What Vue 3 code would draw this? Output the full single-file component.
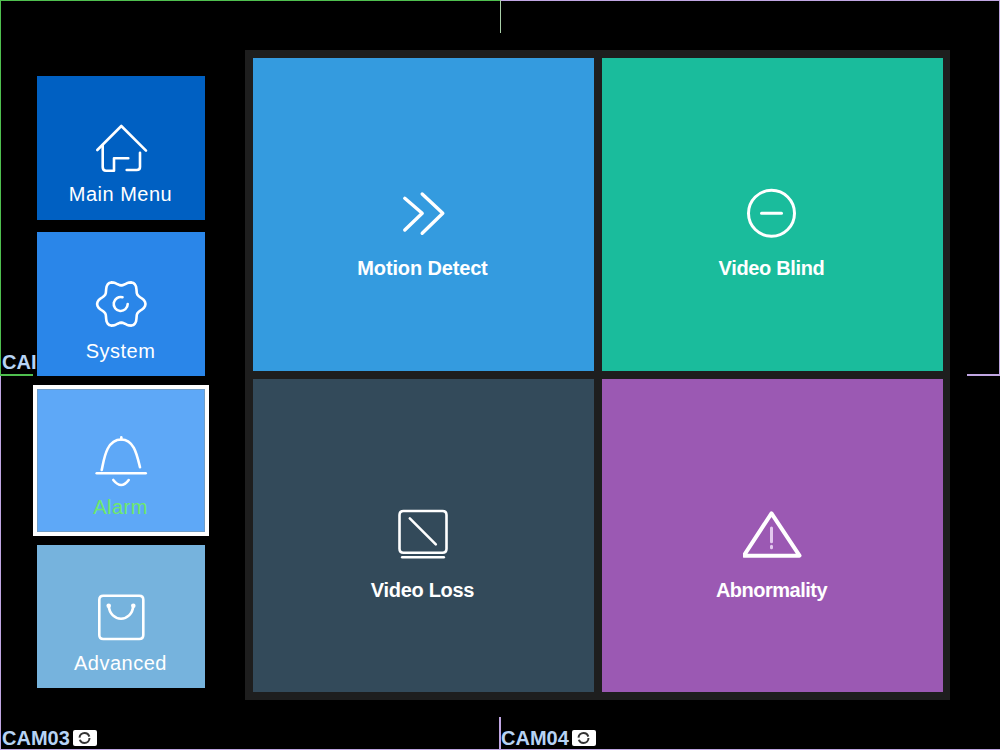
<template>
  <div class="screen">
    <!-- camera grid behind the menu -->
    <i v-for="(l, i) in lines" :key="i" class="line" :style="l"></i>
    <div class="cam cam1">CAI</div>
    <div class="cam cam3">CAM03<svg class="rec" viewBox="0 0 24 16"><rect width="24" height="16" rx="2" fill="#fff" /><circle cx="11.5" cy="8" r="5" fill="none" stroke="#333" stroke-width="2" stroke-dasharray="13.5 2.2" /></svg></div>
    <div class="cam cam4">CAM04<svg class="rec" viewBox="0 0 24 16"><rect width="24" height="16" rx="2" fill="#fff" /><circle cx="11.5" cy="8" r="5" fill="none" stroke="#333" stroke-width="2" stroke-dasharray="13.5 2.2" /></svg></div>

    <div class="sidebar">
      <div v-for="t in sideTiles" :key="t.label" class="side-tile" :class="t.cls">
        <svg class="side-icon" viewBox="0 0 56 52">
          <path v-for="d in t.paths" :key="d" :d="d" />
        </svg>
        <span class="side-label">{{ t.label }}</span>
      </div>
    </div>

    <div class="panel">
      <div v-for="t in mainTiles" :key="t.label" class="main-tile" :class="t.cls">
        <svg class="main-icon" viewBox="0 0 60 56">
          <path v-for="d in t.paths" :key="d" :d="d" />
          <path v-if="t.thin" class="thin" :d="t.thin" />
        </svg>
        <span class="main-label">{{ t.label }}</span>
      </div>
    </div>
  </div>
</template>

<script setup>
const green = '#4fbf4f'
const purple = '#c0a6e2'

const seg = (left, top, width, height, background) => ({
  left: left + 'px',
  top: top + 'px',
  width: width + 'px',
  height: height + 'px',
  background,
})

const lines = [
  seg(0, 0, 500, 1, green),
  seg(0, 0, 1, 375, green),
  seg(0, 374, 33, 2, green),
  seg(500, 0, 1, 33, '#a9cfa9'),
  seg(501, 0, 499, 1, purple),
  seg(999, 0, 1, 375, purple),
  seg(967, 374, 33, 2, purple),
  seg(0, 376, 1, 374, purple),
  seg(499, 717, 2, 33, purple),
  seg(0, 749, 1000, 1, purple),
]

// wavy outline of the gear, six lobes
const gear = () => {
  const pts = []
  for (let a = 0; a < 360; a += 5) {
    const t = (a * Math.PI) / 180
    const r = 21.4 + 2.8 * Math.cos(6 * t)
    pts.push((28.3 + r * Math.cos(t)).toFixed(1) + ' ' + (26 + r * Math.sin(t)).toFixed(1))
  }
  return 'M' + pts.join('L') + 'Z'
}

const sideTiles = [
  {
    label: 'Main Menu',
    cls: 'menu',
    paths: [
      'M4.3 28L28.3 4L53 28.7',
      'M9.7 23V45Q9.7 48.7 13 48.7H21V36.3H35.3',
      'M33.7 48H43.7Q47 48 47 45V30.7',
    ],
  },
  {
    label: 'System',
    cls: 'system',
    paths: [gear(), 'M29.5 19.2A7 7 0 1 0 34.7 26'],
  },
  {
    label: 'Alarm',
    cls: 'alarm',
    paths: [
      'M3.7 38.3H52.7',
      'M8.7 35C11 25 13 4.5 28.3 4.5C41 4.5 44 20 47 32.3',
      'M28.3 2.3V4.5',
      'M20.3 45Q28.3 55 35.7 45',
    ],
  },
  {
    label: 'Advanced',
    cls: 'advanced',
    paths: [
      'M10.3 4.7H46.3Q50.3 4.7 50.3 8.7V44Q50.3 48 46.3 48H10.3Q6.3 48 6.3 44V8.7Q6.3 4.7 10.3 4.7Z',
      'M15.7 14.7C17 32 39 32 40.3 14.7',
      'M14.7 14.7a1 1 0 1 0 2 0a1 1 0 1 0-2 0',
      'M39.3 14.7a1 1 0 1 0 2 0a1 1 0 1 0-2 0',
    ],
  },
]

const mainTiles = [
  {
    label: 'Motion Detect',
    cls: 'motion',
    paths: ['M10.8 12.3L28.2 27.3L10.8 44', 'M28.2 8L48.8 27.3L28.2 47.3'],
  },
  {
    label: 'Video Blind',
    cls: 'blind',
    paths: ['M5.5 27.3A23 23 0 1 0 51.5 27.3A23 23 0 1 0 5.5 27.3Z', 'M18.5 27.3H38.5'],
  },
  {
    label: 'Video Loss',
    cls: 'loss',
    paths: [
      'M9.5 3H48.5Q52.5 3 52.5 7V40.7Q52.5 44.7 48.5 44.7H9.5Q5.5 44.7 5.5 40.7V7Q5.5 3 9.5 3Z',
      'M15.8 10.3L41.8 36.3',
      'M8.2 49.3H49.8',
    ],
  },
  {
    label: 'Abnormality',
    cls: 'abnormal',
    paths: ['M28.5 5.3L56.5 47.7H0.8Z'],
    thin: 'M28.5 20V33.7M28.5 38.2V39.7',
  },
]
</script>

<style>
html,
body {
  background: #000;
}
</style>

<style scoped>
.screen {
  position: relative;
  display: flex;
  width: 1000px;
  height: 750px;
  overflow: hidden;
  background: #000;
  font-family: 'Liberation Sans', Arial, sans-serif;
}

.line {
  position: absolute;
}

.cam {
  position: absolute;
  display: flex;
  align-items: center;
  font-size: 20px;
  font-weight: bold;
  line-height: 24px;
  color: #b7d3f5;
}
.cam1 {
  left: 2px;
  top: 350px;
}
.cam3 {
  left: 2px;
  top: 726px;
}
.cam4 {
  left: 501px;
  top: 726px;
}
.rec {
  width: 24px;
  height: 16px;
  margin-left: 3px;
}

.sidebar {
  display: flex;
  flex-direction: column;
  gap: 12px;
  width: 168px;
  margin: 76px 0 0 37px;
}
.side-tile {
  display: flex;
  flex-direction: column;
  align-items: center;
  height: 144px;
  padding-top: 46px;
  box-sizing: border-box;
  color: #fff;
}
.side-icon {
  width: 56px;
  height: 52px;
  margin-bottom: 8px;
  fill: none;
  stroke: #fff;
  stroke-width: 2.6;
  stroke-linecap: round;
  stroke-linejoin: round;
}
.side-label {
  margin-right: 1px;
  font-size: 20px;
  line-height: 24px;
  letter-spacing: 0.5px;
}
.menu {
  background: #0060c2;
}
.system {
  background: #2a86e9;
}
.system .side-icon {
  margin-bottom: 9px;
}
.alarm {
  height: 143px;
  margin-top: 1px;
  background: #5ea8f7;
  outline: 4px solid #fff;
  box-shadow: inset 0 0 0 1px #6f9ec9;
  color: #6fe86a;
}
.advanced {
  height: 143px;
  margin-top: 1px;
  background: #76b3dd;
}

.panel {
  display: grid;
  grid-template-columns: 341px 341px;
  grid-template-rows: 313px 313px;
  gap: 8px;
  height: 650px;
  box-sizing: border-box;
  margin: 50px 0 0 40px;
  padding: 8px 7px 8px 8px;
  background: #1e1e1e;
}
.main-tile {
  display: flex;
  flex-direction: column;
  align-items: center;
  padding-top: 128px;
  color: #fff;
}
.main-icon {
  width: 60px;
  height: 56px;
  margin-bottom: 14px;
  fill: none;
  stroke: #fff;
  stroke-width: 3;
  stroke-linecap: round;
  stroke-linejoin: round;
}
.main-icon .thin {
  stroke: #e3c8ee;
  stroke-width: 3;
}
.main-label {
  margin-right: 2px;
  font-size: 20px;
  font-weight: bold;
  line-height: 24px;
  letter-spacing: -0.15px;
}
.motion {
  background: #349bdf;
}
.motion .main-icon {
  stroke-width: 3.4;
}
.blind {
  background: #1abc9c;
}
.blind .main-label {
  letter-spacing: -0.35px;
}
.loss {
  background: #334a5a;
  padding-top: 129px;
}
.loss .main-icon {
  stroke-width: 2.6;
}
.loss .main-label {
  letter-spacing: -0.3px;
}
.abnormal {
  background: #9b59b3;
  padding-top: 129px;
}
.abnormal .main-icon {
  stroke-width: 4;
}
.abnormal .main-label {
  letter-spacing: -0.5px;
}
</style>
